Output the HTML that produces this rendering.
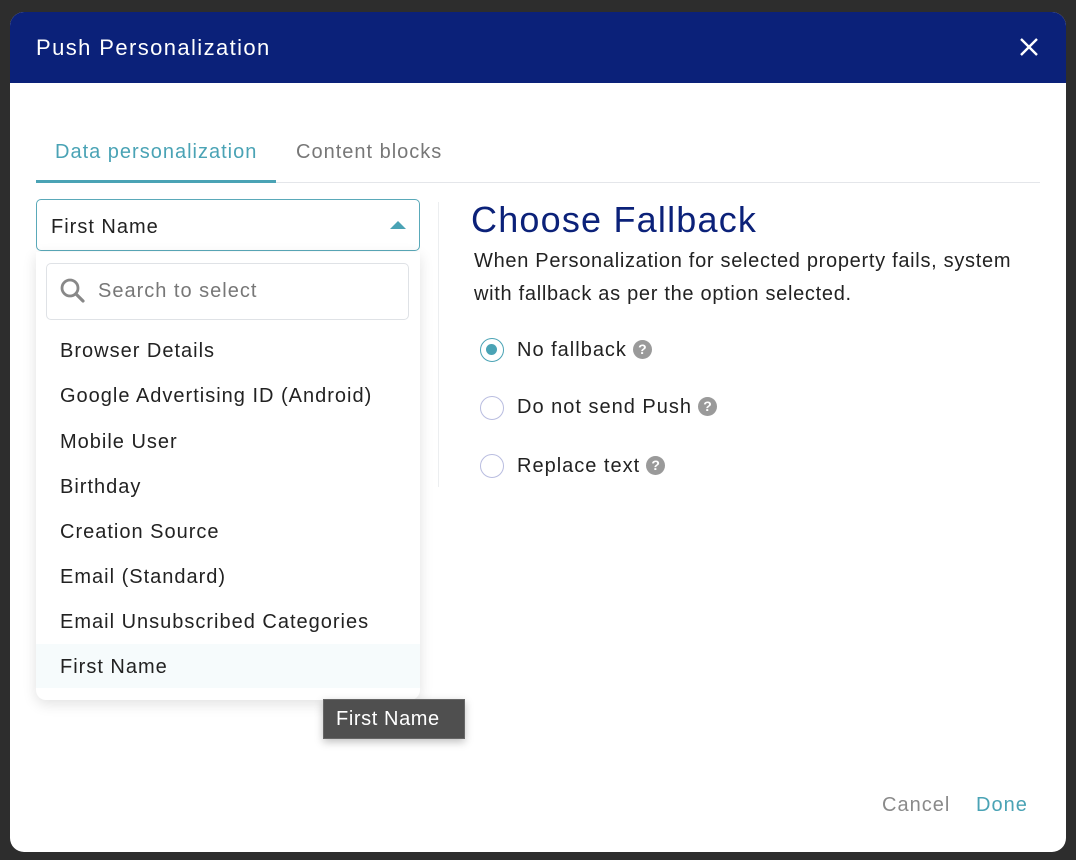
<!DOCTYPE html>
<html><head><meta charset="utf-8"><style>
*{box-sizing:border-box;margin:0;padding:0}
body{width:1076px;height:860px;background:#2d2d2d;font-family:"Liberation Sans",sans-serif;position:relative;overflow:hidden;letter-spacing:1px}
.dlg{position:absolute;left:10px;top:12px;width:1056px;height:840px;background:#fff;border-radius:14px;overflow:hidden}
.hdr{height:71px;background:#0b2179;color:#fff;font-size:22px;padding:23px 0 0 26px;letter-spacing:1.4px}
.x{position:absolute;right:26px;top:24px;width:22px;height:22px}
.abs{position:absolute}
.tab{font-size:20px}
.item{position:absolute;left:50px;font-size:20px;color:#222}
.q{display:inline-block;width:19px;height:19px;border-radius:50%;background:#9a9a9a;color:#fff;font-size:14px;font-weight:bold;text-align:center;line-height:19px;vertical-align:2px;margin-left:6px;letter-spacing:0}
.radio{position:absolute;left:470px;width:24px;height:24px;border-radius:50%;border:1.5px solid #b9bde0;background:#fff}
.rl{position:absolute;left:507px;font-size:20px;color:#222}
</style></head><body>
<div class="dlg">
 <div class="hdr">Push Personalization</div>
 <svg class="x" viewBox="0 0 22 22"><path d="M3 3L19 19M19 3L3 19" stroke="#fff" stroke-width="2.4"/></svg>
 <div class="abs tab" style="left:45px;top:129px;color:#4aa3b5">Data personalization</div>
 <div class="abs tab" style="left:286px;top:129px;color:#777">Content blocks</div>
 <div class="abs" style="left:26px;top:170px;width:1004px;height:1px;background:#e4e6ea"></div>
 <div class="abs" style="left:26px;top:168px;width:240px;height:3px;background:#4aa3b5"></div>
 <div class="abs" style="left:428px;top:190px;width:1px;height:285px;background:#eceef0"></div>
 <div class="abs" style="left:26px;top:187px;width:384px;height:52px;border:1px solid #5aa9b9;border-radius:5px;background:#fff"></div>
 <div class="abs" style="left:41px;top:204px;font-size:20px;color:#222">First Name</div>
 <svg class="abs" style="left:380px;top:208px" width="16" height="10"><path d="M0 9L8 1L16 9Z" fill="#4aa3b5"/></svg>
 <div class="abs" style="left:26px;top:240px;width:384px;height:448px;background:#fff;border-radius:0 0 10px 10px;box-shadow:0 4px 14px rgba(0,0,0,.12)"></div>
 <div class="abs" style="left:36px;top:251px;width:363px;height:57px;border:1px solid #dfe2e6;border-radius:5px"></div>
 <svg class="abs" style="left:49px;top:265px" width="28" height="28" viewBox="0 0 28 28"><circle cx="11" cy="11" r="8" fill="none" stroke="#888" stroke-width="2.8"/><path d="M17 17L24 24" stroke="#888" stroke-width="3.2" stroke-linecap="round"/></svg>
 <div class="abs" style="left:88px;top:268px;font-size:20px;color:#777">Search to select</div>
 <div class="abs" style="left:26px;top:632px;width:384px;height:44px;background:#f6fbfc"></div>
 <div class="item" style="top:328px">Browser Details</div>
 <div class="item" style="top:373px">Google Advertising ID (Android)</div>
 <div class="item" style="top:419px">Mobile User</div>
 <div class="item" style="top:464px">Birthday</div>
 <div class="item" style="top:509px">Creation Source</div>
 <div class="item" style="top:554px">Email (Standard)</div>
 <div class="item" style="top:599px">Email Unsubscribed Categories</div>
 <div class="item" style="top:644px">First Name</div>
 <div class="abs" style="left:313px;top:687px;width:142px;height:40px;background:#4f4f4f;border:1px solid #666;box-shadow:0 3px 8px rgba(0,0,0,.25);color:#fff;font-size:20px;padding:8px 0 0 12px;letter-spacing:0.6px">First Name</div>
 <div class="abs" style="left:461px;top:187px;font-size:36px;color:#0b2179;letter-spacing:1.2px">Choose Fallback</div>
 <div class="abs" style="left:464px;top:233px;font-size:20px;color:#222;line-height:33px;width:565px;letter-spacing:0.7px">When Personalization for selected property fails, system with fallback as per the option selected.</div>
 <div class="radio" style="top:326px;border-color:#4aa3b5"><div style="position:absolute;left:5px;top:5px;width:11px;height:11px;border-radius:50%;background:#4aa3b5"></div></div>
 <div class="rl" style="top:327px">No fallback<span class="q">?</span></div>
 <div class="radio" style="top:384px"></div>
 <div class="rl" style="top:384px">Do not send Push<span class="q">?</span></div>
 <div class="radio" style="top:442px"></div>
 <div class="rl" style="top:443px">Replace text<span class="q">?</span></div>
 <div class="abs" style="left:872px;top:782px;font-size:20px;color:#8a8a8a">Cancel</div>
 <div class="abs" style="left:966px;top:782px;font-size:20px;color:#4aa3b5">Done</div>
</div>
</body></html>
